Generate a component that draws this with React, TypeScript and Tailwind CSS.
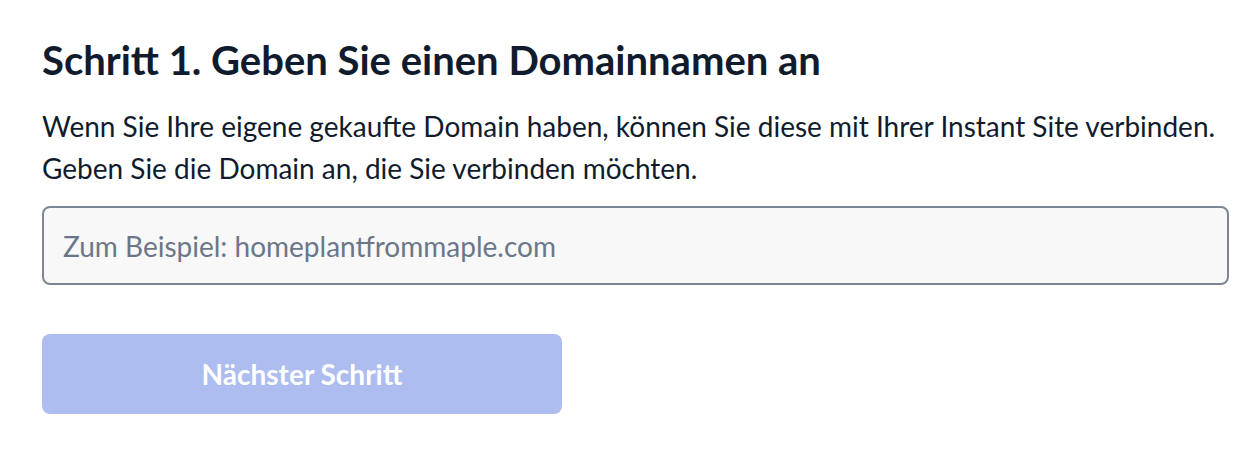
const font = { fontFamily: "Lato, 'Noto Sans', sans-serif" };

export default function App() {
  return (
    <div className="min-h-screen bg-white" style={font}>
      <div className="pl-[42px] pr-[31px] pt-[36px]">
        <h1 className="text-[40px] leading-[48px] font-bold text-[#101c2d]">
          Schritt 1. Geben Sie einen Domainnamen an
        </h1>
        <p className="mt-[21px] text-[28px] leading-[42px] text-[#101c2d]">
          Wenn Sie Ihre eigene gekaufte Domain haben, können Sie diese mit Ihrer Instant Site verbinden.
          <br />
          Geben Sie die Domain an, die Sie verbinden möchten.
        </p>
        <input
          type="text"
          placeholder="Zum Beispiel: homeplantfrommaple.com"
          className="mt-[17px] block w-full h-[79px] px-[19px] rounded-[8px] border-2 border-[#7b8796] bg-[#f8f8f8] text-[28px] text-[#101c2d] placeholder:text-[#6b7789] outline-none"
          style={font}
        />
        <button
          type="button"
          className="mt-[49px] w-[520px] h-[80px] rounded-[8px] bg-[#adbdef] text-white text-[28px] font-bold"
          style={font}
        >
          Nächster Schritt
        </button>
      </div>
    </div>
  );
}
